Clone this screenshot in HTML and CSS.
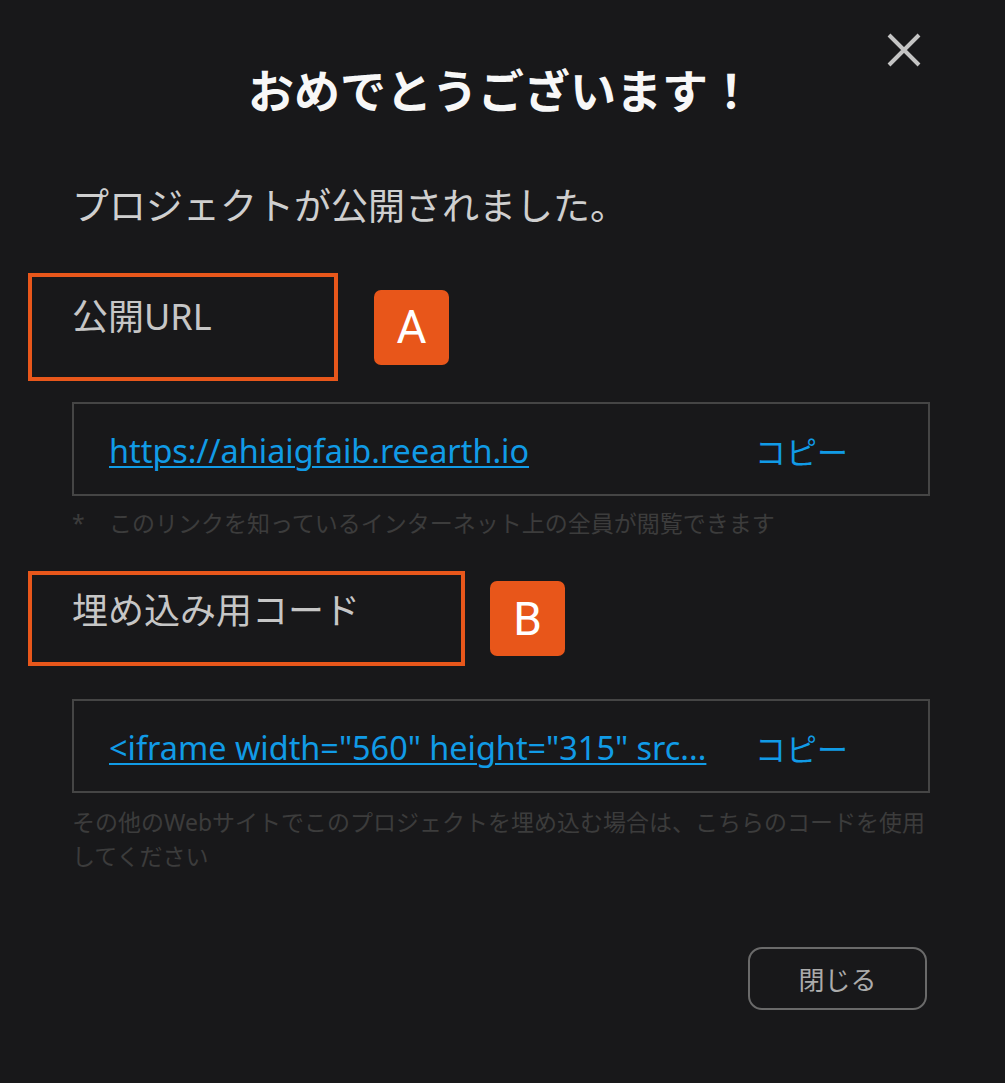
FILE: index.html
```html
<!DOCTYPE html>
<html lang="ja">
<head>
<meta charset="utf-8">
<link rel="stylesheet" href="styles.css">
</head>
<body>
<div class="modal">
  <header class="modal-header">
    <h1 class="title">おめでとうございます！</h1>
    <button class="close" aria-label="閉じる">
      <svg width="36" height="34" viewBox="0 0 36 34"><path d="M3 2 L33 32 M33 2 L3 32" stroke="#c4c4c4" stroke-width="4" stroke-linecap="butt"/></svg>
    </button>
  </header>
  <p class="subtitle">プロジェクトが公開されました。</p>

  <div class="label-row">
    <div class="anno anno-a"><span class="label">公開URL</span></div>
    <span class="badge">A</span>
  </div>
  <div class="field">
    <a class="link" href="#">https://ahiaigfaib.reearth.io</a>
    <span class="copy">コピー</span>
  </div>
  <p class="note"><span class="star">*</span>このリンクを知っているインターネット上の全員が閲覧できます</p>

  <div class="label-row label-row-b">
    <div class="anno anno-b"><span class="label">埋め込み用コード</span></div>
    <span class="badge">B</span>
  </div>
  <div class="field">
    <a class="link" href="#">&lt;iframe width="560" height="315" src...</a>
    <span class="copy">コピー</span>
  </div>
  <p class="note note-embed">その他のWebサイトでこのプロジェクトを埋め込む場合は、こちらのコードを使用<br>してください</p>

  <div class="actions">
    <button class="btn-close">閉じる</button>
  </div>
</div>
</body>
</html>
```
FILE: styles.css
```css
* { box-sizing: border-box; }
html, body {
  margin: 0;
  padding: 0;
  background: #18181a;
}
body {
  font-family: "Noto Sans", "Noto Sans CJK JP", sans-serif;
  color: #c8c8c8;
  width: 1005px;
  height: 1083px;
  overflow: hidden;
}
.modal {
  padding: 61px 75px 0 72px;
}
.modal-header {
  position: relative;
}
.title {
  margin: 0;
  text-align: center;
  font-size: 46px;
  line-height: 58px;
  font-weight: 700;
  color: #f7f7f7;
  padding-left: 0;
}
.close {
  position: absolute;
  top: -28px;
  right: 8px;
  background: none;
  border: none;
  padding: 0;
  width: 36px;
  height: 34px;
  cursor: pointer;
}
.close svg { display: block; }
.subtitle {
  margin: 62px 0 0;
  font-size: 37px;
  line-height: 50px;
  color: #cfcfcf;
}
.label-row {
  display: flex;
  align-items: center;
  margin: 42px 0 0 -44px;
}
.label-row-b { margin-top: 31px; }
.anno {
  border: 4px solid #e8571b;
  padding-left: 40px;
}
.anno-a {
  width: 310px;
  height: 108px;
  padding-top: 18px;
}
.anno-b {
  width: 437px;
  height: 95px;
  padding-top: 14px;
}
.label {
  display: block;
  font-size: 36px;
  line-height: 44px;
  color: #c6c6c6;
}
.badge {
  width: 75px;
  height: 75px;
  margin-left: 36px;
  border-radius: 7px;
  background: #e8561a;
  color: #ffffff;
  font-family: Roboto, "Noto Sans", sans-serif;
  font-size: 46px;
  display: flex;
  align-items: center;
  justify-content: center;
}
.anno-b + .badge { margin-left: 25px; }
.field {
  margin-top: 21px;
  height: 94px;
  border: 2px solid #454545;
  display: flex;
  align-items: center;
  justify-content: space-between;
  padding: 2px 80px 0 35px;
}
.label-row-b + .field { margin-top: 33px; }
.link {
  font-size: 32.4px;
  color: #119be6;
  text-decoration: underline;
  text-decoration-thickness: 2px;
  text-underline-offset: 3px;
}
.copy {
  font-size: 31px;
  color: #119be6;
}
.note {
  margin: 10px 0 0;
  font-size: 23px;
  line-height: 34px;
  color: #3c3c3c;
}
.star {
  display: inline-block;
  width: 37px;
}
.note-embed {
  margin-top: 12px;
  font-size: 23px;
  white-space: nowrap;
}
.actions {
  display: flex;
  justify-content: flex-end;
  margin-top: 74px;
  padding-right: 3px;
}
.btn-close {
  width: 179px;
  height: 63px;
  border: 2px solid #6a6a6a;
  border-radius: 14px;
  background: transparent;
  color: #ababab;
  font-family: "Noto Sans", "Noto Sans CJK JP", sans-serif;
  font-size: 26px;
  padding: 0;
}
```
